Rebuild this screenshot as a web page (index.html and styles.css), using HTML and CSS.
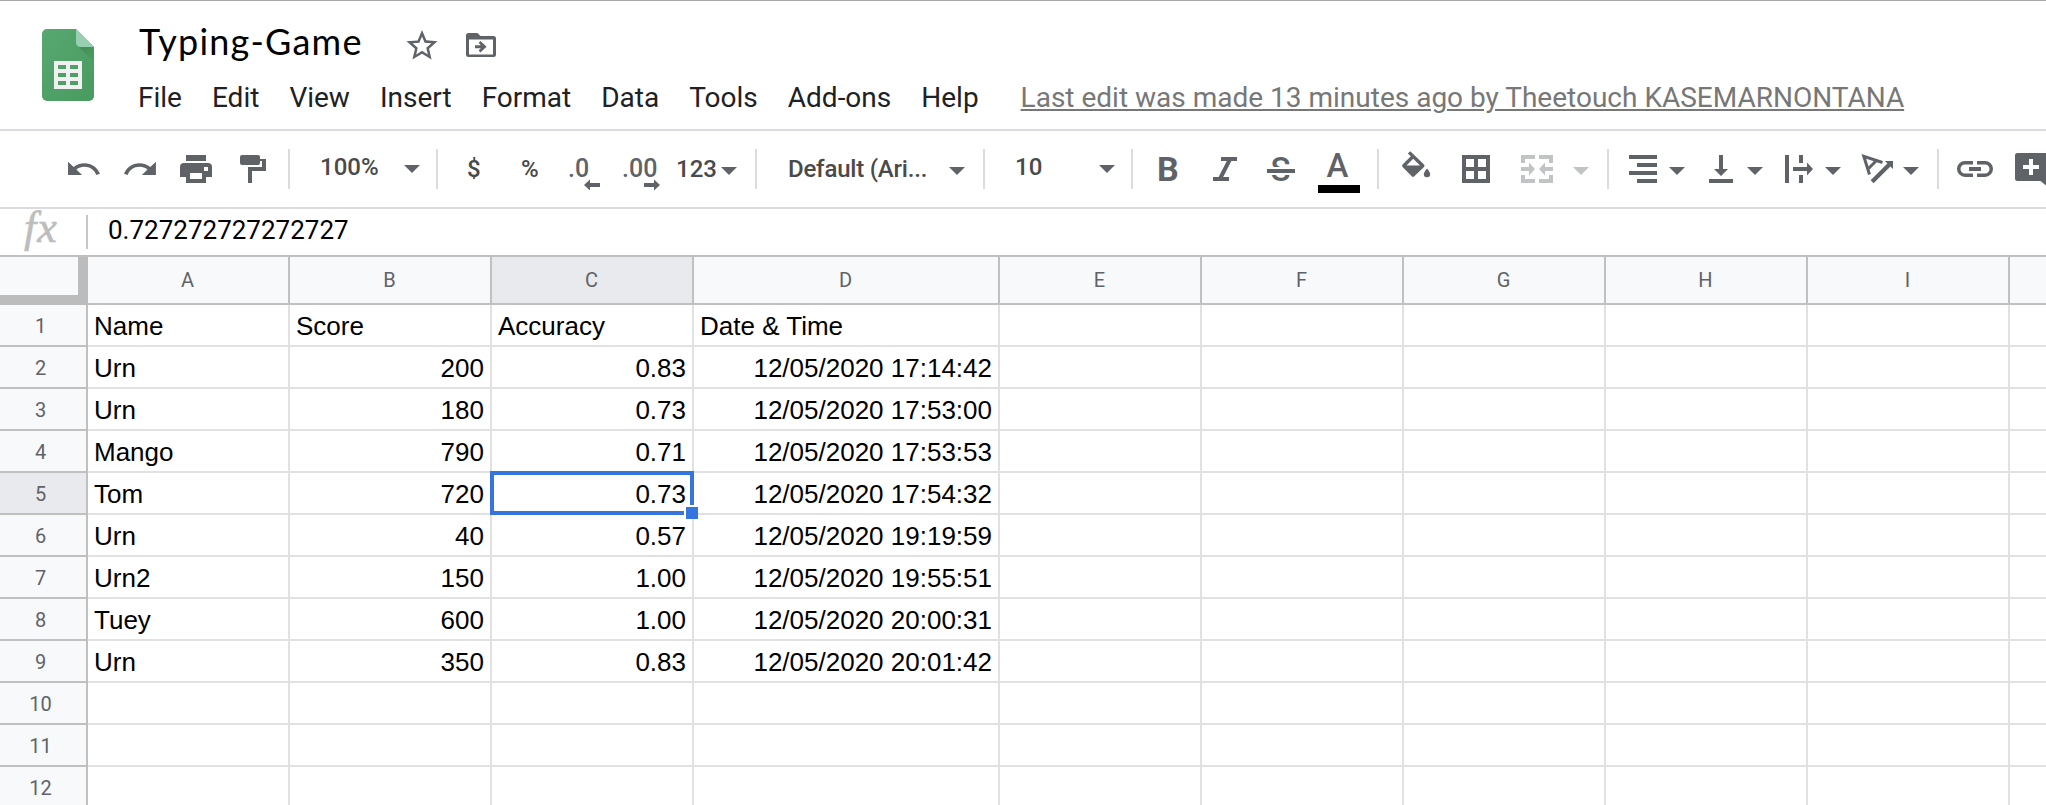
FILE: index.html
```html
<!DOCTYPE html>
<html lang="en">
<head>
<meta charset="utf-8">
<title>Typing-Game</title>
<link rel="stylesheet" href="styles.css">
</head>
<body>
<header class="header">
  <svg class="logo" width="52" height="72" viewBox="0 0 52 72">
    <defs>
      <linearGradient id="sheet" x1="0" y1="0" x2="1" y2="1"><stop offset="0" stop-color="#58a772"/><stop offset="1" stop-color="#489b5e"/></linearGradient>
      <linearGradient id="fold" x1="0" y1="0" x2="1" y2="1"><stop offset="0" stop-color="#3f8a55"/><stop offset="1" stop-color="#4b9e62"/></linearGradient>
    </defs>
    <path fill="url(#sheet)" d="M5 0H34L52 18V67a5 5 0 0 1-5 5H5a5 5 0 0 1-5-5V5a5 5 0 0 1 5-5z"/>
    <path fill="url(#fold)" d="M35.500 16.500L52 33V18z"/>
    <path fill="#98cfb0" d="M34 0L52 18H38.500A4.500 4.500 0 0 1 34 13.500z"/>
    <path fill="#f1f1f1" fill-rule="evenodd" d="M12 32H40V60H12zM16 36v4h8v-4zM28 36v4h8v-4zM16 44v4h8v-4zM28 44v4h8v-4zM16 52v4h8v-4zM28 52v4h8v-4z"/>
  </svg>
  <div class="head-main">
    <div class="title-row">
      <span class="doc-title">Typing-Game</span>
      <svg class="star" width="32" height="32" viewBox="406 29 32 32"><path fill="#5f6368" transform="translate(403.400 27) scale(1.550)" d="M22 9.240l-7.190-.62L12 2 9.190 8.630 2 9.240l5.460 4.730L5.820 21 12 17.270 18.180 21l-1.630-7.030L22 9.240zM12 15.400l-3.760 2.270 1-4.280-3.320-2.880 4.380-.38L12 6.100l1.710 4.040 4.380.38-3.320 2.880 1 4.280L12 15.400z"/></svg>
      <svg class="move" width="30" height="24" viewBox="0 0 30 24"><path fill="#5f6368" fill-rule="evenodd" d="M2.500 0H11.500L14.500 3H27.500A2.500 2.500 0 0 1 30 5.500V21.500A2.500 2.500 0 0 1 27.500 24H2.500A2.500 2.500 0 0 1 0 21.500V2.500A2.500 2.500 0 0 1 2.500 0zM3 6.500V21.500H27V6.500z"/><path fill="#5f6368" d="M9 12.200H14.800L12.600 9.800 14.400 8 20.600 13.700 14.400 19.400 12.600 17.600 14.800 15.200H9z"/></svg>
    </div>
    <nav class="menu">
      <span>File</span><span>Edit</span><span>View</span><span>Insert</span><span>Format</span><span>Data</span><span>Tools</span><span>Add-ons</span><span>Help</span>
      <a class="last-edit">Last edit was made 13 minutes ago by Theetouch KASEMARNONTANA</a>
    </nav>
  </div>
</header>

<div class="toolbar">
  <svg class="ic" width="50" height="75" viewBox="62 132 50 75"><path transform="translate(64.900 151.300) scale(1.560 1.480)" d="M12.500 8c-2.650 0-5.050.99-6.900 2.600L2 7v9h9l-3.620-3.620c1.390-1.160 3.160-1.880 5.120-1.880 3.540 0 6.550 2.310 7.600 5.500l2.370-.78C21.080 11.030 17.150 8 12.500 8z"/></svg>
  <svg class="ic" width="56" height="75" viewBox="112 132 56 75"><path transform="translate(121.600 151.300) scale(1.560 1.480)" d="M18.400 10.600C16.550 8.990 14.150 8 11.500 8c-4.650 0-8.580 3.030-9.960 7.220L3.900 16c1.050-3.190 4.050-5.500 7.600-5.500 1.950 0 3.730.72 5.120 1.880L13 16h9V7l-3.600 3.600z"/></svg>
  <svg class="ic" width="58" height="75" viewBox="168 132 58 75"><path fill-rule="evenodd" d="M186 155h20v6h-20zM184 163h24a4 4 0 0 1 4 4v10h-6v6h-20v-6h-6v-10a4 4 0 0 1 4-4zM190 173v6h12v-6zM204 167v4h4v-4z"/></svg>
  <svg class="ic" width="62" height="75" viewBox="226 132 62 75"><path fill-rule="evenodd" d="M242 155h16a2 2 0 0 1 2 2v2h6v12h-14v12h-4v-16h14v-6h-2v2a2 2 0 0 1-2 2h-16a2 2 0 0 1-2-2v-6a2 2 0 0 1 2-2z"/></svg>
  <i class="sep"></i>
  <div class="pick zoom-pick up"><span>100%</span><b class="caret"></b></div>
  <i class="sep"></i>
  <span class="sym dollar">$</span>
  <span class="sym percent">%</span>
  <svg class="ic" width="54" height="75" viewBox="562 132 54 75"><text class="dec" x="568" y="177">.0</text><path d="M584 185l6-5.500v3.500h10v4h-10v3.500z"/></svg>
  <svg class="ic" width="52" height="75" viewBox="616 132 52 75"><text class="dec" x="622" y="177">.00</text><path d="M660 185l-6-5.500v3.500h-10v4h10v3.500z"/></svg>
  <div class="pick num-pick"><span>123</span><b class="caret"></b></div>
  <i class="sep"></i>
  <div class="pick font-pick"><span>Default (Ari...</span><b class="caret"></b></div>
  <i class="sep"></i>
  <div class="pick size-pick up"><span>10</span><b class="caret"></b></div>
  <i class="sep"></i>
  <svg class="ic" width="65" height="75" viewBox="1133 132 65 75"><text class="bold" x="1157" y="181">B</text></svg>
  <svg class="ic" width="54" height="75" viewBox="1198 132 54 75"><path d="M1221 157h16v4h-5.600l-8.200 16h5.800v4h-16v-4h5.600l8.200-16h-5.800z"/></svg>
  <svg class="ic" width="56" height="75" viewBox="1252 132 56 75"><text class="strike" x="1270.500" y="181">S</text><path fill="#fff" d="M1265 167h32v8h-32z"/><path d="M1267 169h28v4h-28z"/></svg>
  <svg class="ic" width="69" height="75" viewBox="1308 132 69 75"><text class="color-a" x="1326.500" y="177">A</text><path fill="#000" d="M1318 185h42v8h-42z"/></svg>
  <i class="sep"></i>
  <svg class="ic" width="66" height="75" viewBox="1379 132 66 75"><path fill-rule="evenodd" d="M1410.300 151.200L1424 164.500a1.800 1.800 0 0 1 0 2.500L1414.300 176.300a1.800 1.800 0 0 1-2.500 0L1402.600 167a1.800 1.800 0 0 1 0-2.500L1410.800 156.300 1407.800 153.400zM1413.200 158.700L1406.500 165.500H1420z"/><path d="M1427 168.500s3.200 3.700 3.200 5.600a3.200 3.200 0 0 1-6.400 0c0-1.900 3.200-5.600 3.200-5.600z"/></svg>
  <svg class="ic" width="60" height="75" viewBox="1445 132 60 75"><path fill-rule="evenodd" d="M1462 155h28v28h-28zM1466 159v8h8v-8zM1478 159v8h8v-8zM1466 171v8h8v-8zM1478 171v8h8v-8z"/></svg>
  <svg class="ic off" width="68" height="75" viewBox="1505 132 68 75"><path d="M1521 155h14v4h-10v4h-4zM1539 155h14v8h-4v-4h-10zM1521 175h4v4h10v4h-14zM1549 175h4v8h-14v-4h10zM1521 167h8v-4.500l6 6.500-6 6.500v-4.500h-8zM1553 167h-8v-4.500l-6 6.500 6 6.500v-4.500h8z"/></svg>
  <b class="caret off"></b>
  <i class="sep merge-sep"></i>
  <svg class="ic" width="60" height="75" viewBox="1609 132 60 75"><path d="M1629 155h28v4h-28zM1637 163h20v4h-20zM1629 171h28v4h-28zM1637 179h20v4h-20z"/></svg>
  <b class="caret"></b>
  <svg class="ic" width="62" height="75" viewBox="1685 132 62 75"><path d="M1719 155h4v14h5l-7 7-7-7h5zM1709 179h24v4h-24z"/></svg>
  <b class="caret"></b>
  <svg class="ic" width="62" height="75" viewBox="1763 132 62 75"><path d="M1785 155h4v28h-4zM1799 155h4v8h-4zM1799 175h4v8h-4zM1793 167h14v-4.500l6 6.500-6 6.500v-4.500h-14z"/></svg>
  <b class="caret"></b>
  <svg class="ic" width="62" height="75" viewBox="1841 132 62 75"><path fill="none" stroke="#5f6368" stroke-width="3" d="M1869.500 174.500L1863.800 156.300 1882.500 162.500M1868 169l8.500-8.500"/><path d="M1893 161v8l-2.600-2.600-16.800 16.800-3-3 16.800-16.800-2.400-2.400z"/></svg>
  <b class="caret"></b>
  <i class="sep link-sep"></i>
  <svg class="ic" width="64" height="75" viewBox="1939 132 64 75"><path fill="none" stroke="#5f6368" stroke-width="3.500" d="M1973 162.700h-8a6.200 6.200 0 0 0 0 12.500h8M1977 162.700h8a6.200 6.200 0 0 1 0 12.500h-8"/><path d="M1969 167h12v4h-12z"/></svg>
  <svg class="ic" width="43" height="75" viewBox="2003 132 43 75"><path fill-rule="evenodd" d="M2017.500 153H2048v34L2040.500 181h-23a2.500 2.500 0 0 1-2.500-2.500v-23a2.500 2.500 0 0 1 2.500-2.500zM2029 159v6h-6v4h6v6h4v-6h6v-4h-6v-6z"/></svg>
</div>

<div class="formula"><span class="fx">fx</span><i class="fx-sep"></i><span class="value">0.727272727272727</span></div>

<table class="grid">
  <colgroup><col class="c-head"><col><col><col><col class="c-date"><col><col><col><col><col><col class="c-cut"></colgroup>
  <tr class="letters"><th class="corner"></th><th>A</th><th>B</th><th class="on">C</th><th>D</th><th>E</th><th>F</th><th>G</th><th>H</th><th>I</th><th></th></tr>
  <tr><th>1</th><td>Name</td><td>Score</td><td>Accuracy</td><td>Date &amp; Time</td><td></td><td></td><td></td><td></td><td></td><td></td></tr>
  <tr><th>2</th><td>Urn</td><td class="n">200</td><td class="n">0.83</td><td class="n">12/05/2020 17:14:42</td><td></td><td></td><td></td><td></td><td></td><td></td></tr>
  <tr><th>3</th><td>Urn</td><td class="n">180</td><td class="n">0.73</td><td class="n">12/05/2020 17:53:00</td><td></td><td></td><td></td><td></td><td></td><td></td></tr>
  <tr><th>4</th><td>Mango</td><td class="n">790</td><td class="n">0.71</td><td class="n">12/05/2020 17:53:53</td><td></td><td></td><td></td><td></td><td></td><td></td></tr>
  <tr><th class="on">5</th><td>Tom</td><td class="n">720</td><td class="n active">0.73<i class="outline"></i><i class="handle"></i></td><td class="n">12/05/2020 17:54:32</td><td></td><td></td><td></td><td></td><td></td><td></td></tr>
  <tr><th>6</th><td>Urn</td><td class="n">40</td><td class="n">0.57</td><td class="n">12/05/2020 19:19:59</td><td></td><td></td><td></td><td></td><td></td><td></td></tr>
  <tr><th>7</th><td>Urn2</td><td class="n">150</td><td class="n">1.00</td><td class="n">12/05/2020 19:55:51</td><td></td><td></td><td></td><td></td><td></td><td></td></tr>
  <tr><th>8</th><td>Tuey</td><td class="n">600</td><td class="n">1.00</td><td class="n">12/05/2020 20:00:31</td><td></td><td></td><td></td><td></td><td></td><td></td></tr>
  <tr><th>9</th><td>Urn</td><td class="n">350</td><td class="n">0.83</td><td class="n">12/05/2020 20:01:42</td><td></td><td></td><td></td><td></td><td></td><td></td></tr>
  <tr><th>10</th><td></td><td></td><td></td><td></td><td></td><td></td><td></td><td></td><td></td><td></td></tr>
  <tr><th>11</th><td></td><td></td><td></td><td></td><td></td><td></td><td></td><td></td><td></td><td></td></tr>
  <tr><th>12</th><td></td><td></td><td></td><td></td><td></td><td></td><td></td><td></td><td></td><td></td></tr>
</table>
</body>
</html>
```

FILE: styles.css
```css
* { box-sizing: border-box; }
html, body { margin: 0; overflow: hidden; }
body { width: 2046px; height: 805px; background: #fff; font-family: Roboto, sans-serif; color: #000; }
svg { display: block; flex: none; }

.header { display: flex; height: 131px; border-top: 1px solid #a6a6a6; border-bottom: 2px solid #dadce0; padding-left: 42px; }
.logo { margin-top: 28px; }
.head-main { padding-left: 29px; }
.title-row { display: flex; height: 72px; padding-left: 16px; }
.doc-title { width: 267px; padding-top: 18px; font: 36px/44px Lato, sans-serif; letter-spacing: 1.2px; white-space: nowrap; }
.star { margin-top: 28px; }
.move { margin: 32px 0 0 28px; }
.menu { display: flex; height: 48px; font-size: 28px; line-height: 50px; color: #202124; white-space: nowrap; }
.menu span { padding: 0 15px; }
.last-edit { margin-left: 27px; color: #777; text-decoration: underline; }

.toolbar { display: flex; height: 78px; padding-left: 62px; border-bottom: 2px solid #dadce0; align-items: flex-start; overflow: hidden; font-size: 24px; font-weight: 500; color: #4a4a4a; }
.ic { margin-top: 1px; fill: #5f6368; }
.ic.off { fill: #c2c3c5; }
.sep { flex: none; width: 2px; height: 40px; margin-top: 18px; background: #dadce0; }
.caret { flex: none; width: 16px; height: 8px; margin-top: 36px; background: #5f6368; clip-path: polygon(0 0, 100% 0, 50% 100%); }
.caret.off { background: #c2c3c5; }
.merge-sep, .link-sep { margin-left: 18px; }
.pick { display: flex; flex: none; justify-content: space-between; line-height: 28px; white-space: nowrap; }
.pick span { margin-top: 24px; }
.pick.up span { margin-top: 22px; }
.pick.up .caret { margin-top: 34px; }
.zoom-pick { width: 146px; padding: 0 16px 0 30px; }
.num-pick { width: 87px; padding: 0 18px 0 8px; }
.font-pick { width: 226px; padding: 0 18px 0 31px; letter-spacing: -0.2px; }
.size-pick { width: 146px; padding: 0 16px 0 30px; }
.sym { flex: none; line-height: 28px; margin-top: 24px; }
.dollar { width: 82px; padding-left: 29px; }
.percent { width: 42px; padding-left: 1px; }
.dec { font: 500 25px Roboto, sans-serif; fill: #5f6368; }
.bold { font: 700 34px Roboto, sans-serif; }
.strike { font: 500 33px Roboto, sans-serif; }
.color-a { font: 500 33px Roboto, sans-serif; }

.formula { display: flex; height: 48px; border-bottom: 2px solid #c0c0c0; }
.fx { width: 86px; padding-left: 24px; font: italic 44px/38px "Liberation Serif", serif; color: #bdbdbd; -webkit-text-stroke: 0.6px #bdbdbd; letter-spacing: 1px; }
.fx-sep { width: 2px; height: 34px; margin-top: 6px; background: #c6c6c6; }
.value { padding-left: 20px; font-size: 26px; line-height: 43px; }

.grid { table-layout: fixed; width: 2046px; border-collapse: separate; border-spacing: 0; }
.grid col { width: 202px; }
.grid .c-head { width: 88px; }
.grid .c-date { width: 306px; }
.grid .c-cut { width: 36px; }
.grid tr { height: 42px; }
.grid .letters { height: 48px; }
.grid th { padding: 0 1px 0 0; border: solid #c0c0c0; border-width: 0 2px 2px 0; background: #f8f9fb; font-size: 20px; font-weight: 400; line-height: 24px; color: #5f6368; }
.grid tr:not(.letters) th { padding: 1px 5px 0 0; }
.grid th.on { background: #e8eaed; }
.grid th.corner { border: solid #bcbcbc; border-width: 0 10px 10px 0; }
.grid th:last-child { border-right: 0; }
.grid td { position: relative; height: 42px; padding: 1px 6px 0; border: solid #e1e1e1; border-width: 0 2px 2px 0; font: 26px/30px "Liberation Sans", sans-serif; white-space: nowrap; }
.grid td:last-child { border-right: 0; }
.grid .n { text-align: right; }
.grid .active { z-index: 1; }
.outline { position: absolute; inset: -2px -2px -2px -2px; border: 4px solid #3674e0; }
.handle { position: absolute; right: -6px; bottom: -6px; width: 14px; height: 14px; background: #3674e0; border: solid #fff; border-width: 2px 0 0 2px; }
```
